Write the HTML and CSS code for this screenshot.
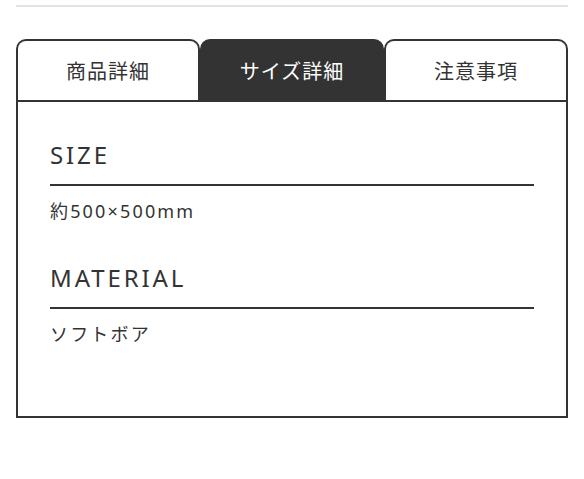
FILE: index.html
```html
<!DOCTYPE html>
<html lang="ja">
<head>
<meta charset="utf-8">
<link rel="stylesheet" href="styles.css">
</head>
<body>
<div class="page">
  <div class="rule"></div>
  <div class="tabs">
    <div class="tab">商品詳細</div>
    <div class="tab active">サイズ詳細</div>
    <div class="tab">注意事項</div>
  </div>
  <div class="panel">
    <h2 class="heading">SIZE</h2>
    <p class="value">約500×500mm</p>
    <h2 class="heading second">MATERIAL</h2>
    <p class="value">ソフトボア</p>
  </div>
</div>
</body>
</html>
```

FILE: styles.css
```css
* { box-sizing: border-box; }
html, body { margin: 0; padding: 0; background: #fff; }
body {
  font-family: "Noto Sans", "Noto Sans CJK JP", sans-serif;
  color: #333;
}
.page {
  padding: 5px 16px 0;
}
.rule {
  height: 2px;
  background: #e2e2e2;
}
.tabs {
  display: flex;
  margin-top: 32px;
  height: 61px;
}
.tab {
  flex: 1;
  display: flex;
  align-items: center;
  justify-content: center;
  border: 2px solid #333;
  border-bottom: none;
  border-radius: 10px 10px 0 0;
  background: #fff;
  font-family: "Noto Sans CJK JP", sans-serif;
  font-size: 20px;
  letter-spacing: 1px;
  color: #333;
}
.tab.active {
  background: #333;
  color: #fff;
}
.panel {
  border: 2px solid #333;
  padding: 35px 32px 69px;
}
.heading {
  margin: 0;
  font-size: 24px;
  font-weight: 400;
  line-height: 36px;
  letter-spacing: 0.12em;
  padding-bottom: 11px;
  border-bottom: 2px solid #333;
}
.heading.second {
  margin-top: 36px;
}
.value {
  margin: 12px 0 0;
  font-family: "Noto Sans", "Noto Sans CJK JP", sans-serif;
  font-size: 18px;
  line-height: 26px;
  letter-spacing: 0.12em;
}
```
